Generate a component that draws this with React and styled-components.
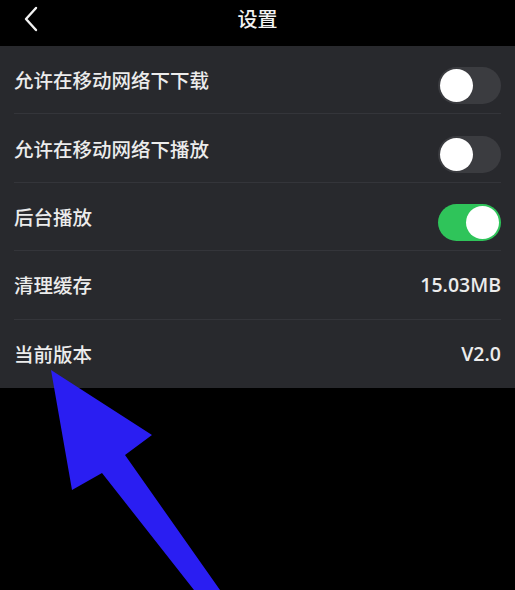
import React from "react";
import styled, { createGlobalStyle } from "styled-components";

const Global = createGlobalStyle`
  html, body { margin: 0; padding: 0; background: #000; }
  body { font-family: "Noto Sans CJK SC", "Noto Sans", sans-serif; }
`;

const Page = styled.div`
  position: relative;
  width: 515px;
  height: 590px;
  background: #000;
  overflow: hidden;
`;

const Header = styled.div`
  height: 46px;
  box-sizing: border-box;
  padding-top: 5px;
  display: flex;
  align-items: flex-start;
  justify-content: center;
  position: relative;
  color: #f2f2f2;
  font-size: 20px;
  line-height: 28px;
  font-weight: 500;
`;

const Back = styled.div`
  position: absolute;
  left: 20px;
  top: 5px;
  width: 24px;
  height: 28px;
  display: flex;
`;

const Panel = styled.div`
  background: #28292d;
  display: flex;
  flex-direction: column;
`;

const Row = styled.div`
  height: 68.4px;
  margin: 0 14px;
  display: flex;
  align-items: center;
  justify-content: space-between;
  border-bottom: ${(p) => (p.$last ? "none" : "1px solid #34353a")};
  box-sizing: border-box;
`;

const Label = styled.span`
  color: #ececec;
  font-size: 19.5px;
  font-weight: 500;
`;

const Value = styled.span`
  color: #ececec;
  font-size: 19.5px;
  font-weight: 600;
  font-family: "Open Sans", "Noto Sans", sans-serif;
`;

const Track = styled.div`
  width: 63px;
  height: 37px;
  margin-top: 12px;
  border-radius: 19px;
  background: ${(p) => (p.$on ? "#2fc45a" : "#3b3c40")};
  display: flex;
  align-items: center;
  justify-content: ${(p) => (p.$on ? "flex-end" : "flex-start")};
  padding: 0 2px;
  box-sizing: border-box;
`;

const Knob = styled.div`
  width: 33px;
  height: 33px;
  border-radius: 50%;
  background: #fff;
`;

const Overlay = styled.svg`
  position: absolute;
  left: 0;
  top: 0;
  pointer-events: none;
`;

const Toggle = ({ on }) => (
  <Track $on={on}>
    <Knob />
  </Track>
);

export default function App() {
  const rows = [
    { label: "允许在移动网络下下载", toggle: false },
    { label: "允许在移动网络下播放", toggle: false },
    { label: "后台播放", toggle: true },
    { label: "清理缓存", value: "15.03MB" },
    { label: "当前版本", value: "V2.0" },
  ];
  return (
    <>
      <Global />
      <Page>
        <Header>
          <Back>
            <svg width="24" height="28" viewBox="0 0 24 28">
              <path d="M16 3 L6 14 L16 25" fill="none" stroke="#f2f2f2" strokeWidth="2.4" strokeLinecap="round" strokeLinejoin="round" />
            </svg>
          </Back>
          设置
        </Header>
        <Panel>
          {rows.map((r, i) => (
            <Row key={r.label} $last={i === rows.length - 1}>
              <Label>{r.label}</Label>
              {r.value ? <Value>{r.value}</Value> : <Toggle on={r.toggle} />}
            </Row>
          ))}
        </Panel>
        <Overlay width="515" height="590" viewBox="0 0 515 590">
          <polygon
            points="51,370 152,435 125,455 220,590 194,590 102,473 72,490"
            fill="#2a1ef2"
          />
        </Overlay>
      </Page>
    </>
  );
}
